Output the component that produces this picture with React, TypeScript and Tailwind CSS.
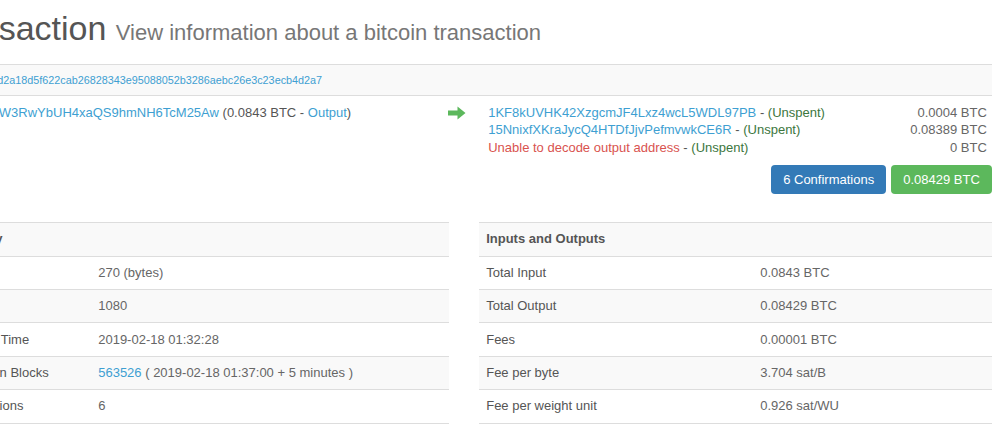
import React from 'react';

const link = 'text-[#3e9fd2]';

const summaryRows: { label: string; value: React.ReactNode }[] = [
    { label: 'Size', value: '270 (bytes)' },
    { label: 'Weight', value: '1080' },
    { label: 'Received Time', value: '2019-02-18 01:32:28' },
    {
        label: 'Included In Blocks',
        value: (
            <>
                <a className={link}>563526</a> ( 2019-02-18 01:37:00 + 5 minutes )
            </>
        ),
    },
    { label: 'Confirmations', value: '6' },
];

const ioRows = [
    { label: 'Total Input', value: '0.0843 BTC' },
    { label: 'Total Output', value: '0.08429 BTC' },
    { label: 'Fees', value: '0.00001 BTC' },
    { label: 'Fee per byte', value: '3.704 sat/B' },
    { label: 'Fee per weight unit', value: '0.926 sat/WU' },
];

const outputs = [
    { address: '1KF8kUVHK42XzgcmJF4Lxz4wcL5WDL97PB', amount: '0.0004 BTC' },
    { address: '15NnixfXKraJycQ4HTDfJjvPefmvwkCE6R', amount: '0.08389 BTC' },
    { address: null, amount: '0 BTC' },
];

const ArrowRight = () => (
    <svg width="18" height="14" viewBox="0 0 18 14" className="mt-[2px]">
        <path d="M0 4.5h9.5V0.5L17.5 7l-8 6.5v-4H0z" fill="#5cb85c" />
    </svg>
);

const InfoTable = ({ title, rows, labelWidth }: { title: string; rows: { label: string; value: React.ReactNode }[]; labelWidth: string }) => (
    <table className="w-full border-collapse text-left">
        <thead>
            <tr className="bg-[#f9f9f9]">
                <th colSpan={2} className="border-y border-[#ddd] px-[7.2px] py-[7.2px] font-bold text-[#555]">
                    {title}
                </th>
            </tr>
        </thead>
        <tbody>
            {rows.map((row, i) => (
                <tr key={row.label} className={i % 2 === 1 ? 'bg-[#f9f9f9]' : ''}>
                    <td className={`${labelWidth} border-b border-[#ddd] px-[7.2px] py-[7.2px] text-[#555]`}>{row.label}</td>
                    <td className="border-b border-[#ddd] px-[7.2px] py-[7.2px] text-[#666]">{row.value}</td>
                </tr>
            ))}
        </tbody>
    </table>
);

export default function App() {
    return (
        <div className="h-[425px] w-[1003px] overflow-hidden bg-white font-['Liberation_Sans',Arial,sans-serif] text-[13px] leading-[18px] text-[#555]">
            <div className="ml-[-64px] w-[1056px]">
                <h1 className="ml-[-6px] mt-[10px] text-[34px] font-normal leading-[37px] text-[#555]">
                    Transaction <small className="text-[22px] text-[#777]">View information about a bitcoin transaction</small>
                </h1>

                {/* hash + inputs/outputs */}
                <table className="mb-[21px] mt-[13px] w-full border-collapse text-left">
                    <tbody>
                        <tr className="bg-[#f9f9f9]">
                            <th colSpan={3} className="border-y border-[#ddd] px-[7.2px] py-[7.2px] text-[10.8px] font-normal leading-[16px]">
                                <a className={link}>409182736d2a18d5f622cab26828343e95088052b3286aebc26e3c23ecb4d2a7</a>
                            </th>
                        </tr>
                        <tr>
                            <td className="w-[505px] px-[7.2px] py-[7.2px] align-top">
                                <a className={link}>1JtrK2NBW3RwYbUH4xaQS9hmNH6TcM25Aw</a> (0.0843 BTC - <a className={link}>Output</a>)
                            </td>
                            <td className="w-[40px] px-[7.2px] py-[7.2px] align-top">
                                <ArrowRight />
                            </td>
                            <td className="px-[7.2px] py-[7.2px] align-top">
                                {outputs.map((o) => (
                                    <div key={o.amount} className="flex justify-between leading-[17.5px]">
                                        <span>
                                            {o.address ? (
                                                <a className={link}>{o.address}</a>
                                            ) : (
                                                <span className="text-[#d9534f]">Unable to decode output address</span>
                                            )}{' '}
                                            - <span className="text-[#3c763d]">(Unspent)</span>
                                        </span>
                                        <span className="mr-[-2px] text-[#666]">{o.amount}</span>
                                    </div>
                                ))}
                                <div className="mr-[-7px] mt-[9px] flex justify-end gap-[5px]">
                                    <button className="h-[29px] rounded-[4px] bg-[#337ab7] px-[12px] text-[13px] text-white">6 Confirmations</button>
                                    <button className="h-[29px] rounded-[4px] bg-[#5cb85c] px-[12px] text-[13px] text-white">0.08429 BTC</button>
                                </div>
                            </td>
                        </tr>
                    </tbody>
                </table>

                <div className="grid grid-cols-2 gap-[30px]">
                    <InfoTable title="Summary" rows={summaryRows} labelWidth="w-[155px]" />
                    <InfoTable title="Inputs and Outputs" rows={ioRows} labelWidth="w-[274px]" />
                </div>
            </div>
        </div>
    );
}
